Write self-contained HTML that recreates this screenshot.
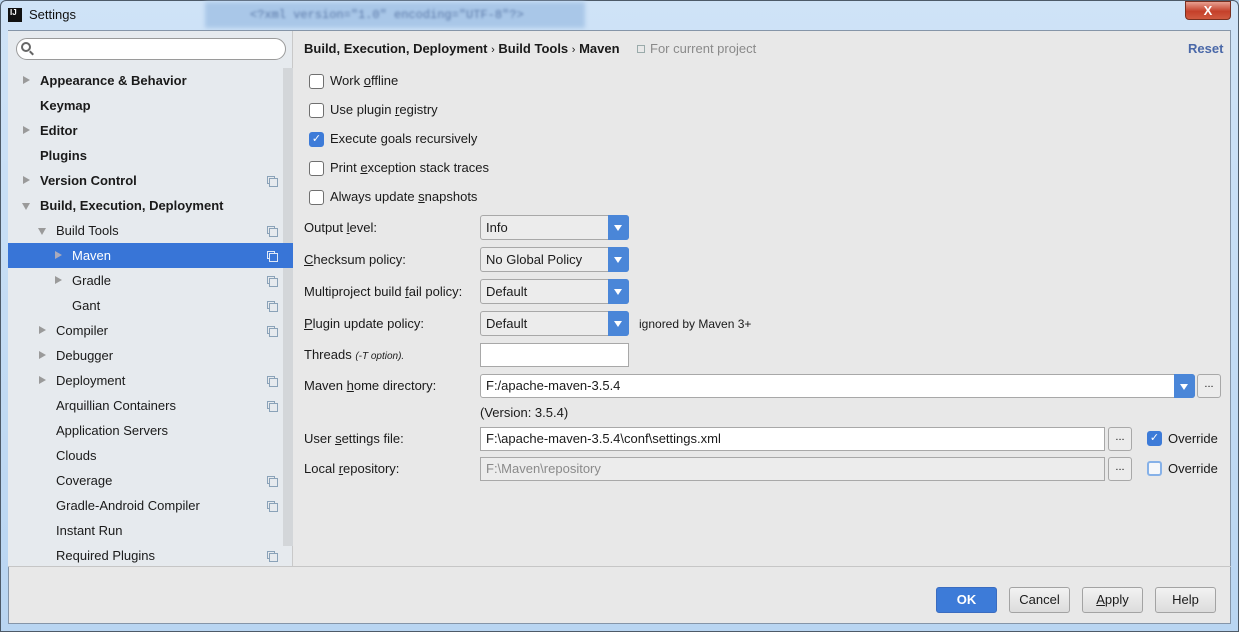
<!DOCTYPE html>
<html><head><meta charset="utf-8"><style>
*{margin:0;padding:0;box-sizing:border-box}
body{width:1239px;height:632px;overflow:hidden;position:relative;background:#bcd7f0;font-family:"Liberation Sans","DejaVu Sans",sans-serif;font-size:13px;color:#1a1a1a}
.a{position:absolute}
.win{left:0;top:0;width:1239px;height:632px;border:1px solid #4d5a68;border-radius:6px 6px 0 0;background:linear-gradient(#cfe3f7,#b9d5f1)}
.content{left:8px;top:30px;width:1223px;height:594px;background:#e8e8e8;border:1px solid #8595a8}
.side{left:8px;top:31px;width:285px;height:535px;background:#e6eaee;border-right:1px solid #c9c9c9}
.sb{left:283px;top:68px;width:10px;height:478px;background:#d3d6d9}
.row{position:absolute;left:8px;width:275px;height:25px;line-height:25px;font-size:13px}
.row.sel{background:#3875d7;color:#fff;width:285px}
.tri{position:absolute;width:0;height:0;top:8px;border-left:7px solid #9a9a9a;border-top:4.5px solid transparent;border-bottom:4.5px solid transparent}
.trid{position:absolute;width:0;height:0;top:10px;border-top:7px solid #9a9a9a;border-left:4.5px solid transparent;border-right:4.5px solid transparent}
.cp{position:absolute;left:259px;top:8px;width:8px;height:8px;border:1px solid #8aa2b8}
.cp:after{content:"";position:absolute;left:1px;top:1px;width:7px;height:7px;border:1px solid #8aa2b8;background:#e6eaee}
.sel .cp{border-color:#dfe8f7}.sel .cp:after{border-color:#dfe8f7;background:#3875d7}
.b{font-weight:bold}
.cb{position:absolute;width:15px;height:15px;border:1px solid #6f6f6f;border-radius:3px;background:#fff}
.cb.on{background:#3d7bd8;border-color:#3d7bd8;color:#fff;font-size:11px;line-height:13px;text-align:center;font-weight:bold}
.lbl{position:absolute;font-size:13px}
.combo{position:absolute;width:149px;height:25px;border:1px solid #a8a8a8;border-radius:3px;background:#ececec;line-height:23px;padding-left:5px}
.combo .arr,.arr{position:absolute;right:-1px;top:-1px;width:21px;height:25px;background:#4a86d8;border-radius:0 3px 3px 0}
.arr:after{content:"";position:absolute;left:6px;top:10px;border-top:6px solid #fff;border-left:4.5px solid transparent;border-right:4.5px solid transparent}
.field{position:absolute;height:24px;border:1px solid #a8a8a8;background:#fff;line-height:22px;padding-left:5px}
.dots{position:absolute;width:24px;height:24px;border:1px solid #a8a8a8;border-radius:3px;background:#ececec;text-align:center;line-height:18px;font-size:11px}
.btn{position:absolute;top:587px;width:61px;height:26px;border:1px solid #a3a3a3;border-radius:3px;background:linear-gradient(#f2f2f2,#dcdcdc);text-align:center;line-height:24px}
u{text-decoration:underline}
</style></head><body>
<div class="a win"></div>
<div class="a" style="left:205px;top:2px;width:380px;height:26px;background:#a9c7e8;filter:blur(2px)"></div>
<div class="a" style="left:250px;top:8px;color:#5a78a8;font-family:'Liberation Mono',monospace;font-size:12px;filter:blur(1.2px)">&lt;?xml version="1.0" encoding="UTF-8"?&gt;</div>
<div class="a" style="left:8px;top:8px;width:14px;height:14px;background:#111;color:#fff;font-size:8px;font-weight:bold;line-height:10px;padding-left:2px">IJ</div>
<div class="a" style="left:29px;top:7px;font-size:13px;color:#111">Settings</div>
<div class="a" style="left:1185px;top:1px;width:46px;height:19px;background:linear-gradient(#e8a090,#c4402a 55%,#d05a40);border:1px solid #7a3020;border-radius:0 0 4px 4px;color:#fff;text-align:center;font-weight:bold;font-size:13px;line-height:17px">X</div>
<div class="a content"></div>
<div class="a side"></div>
<div class="a sb"></div>
<div class="a" style="left:16px;top:38px;width:270px;height:22px;border:1px solid #9a9a9a;border-radius:11px;background:#fff"></div>
<div class="a" style="left:21px;top:42px;width:10px;height:10px;border:2px solid #666;border-radius:50%"></div>
<div class="a" style="left:29px;top:52px;width:5px;height:2px;background:#666;transform:rotate(45deg)"></div>

<div class="row" style="top:68px"><span class="tri" style="left:15px"></span><span class="b" style="position:absolute;left:32px">Appearance &amp; Behavior</span></div>
<div class="row" style="top:93px"><span class="b" style="position:absolute;left:32px">Keymap</span></div>
<div class="row" style="top:118px"><span class="tri" style="left:15px"></span><span class="b" style="position:absolute;left:32px">Editor</span></div>
<div class="row" style="top:143px"><span class="b" style="position:absolute;left:32px">Plugins</span></div>
<div class="row" style="top:168px"><span class="tri" style="left:15px"></span><span class="b" style="position:absolute;left:32px">Version Control</span><span class="cp"></span></div>
<div class="row" style="top:193px"><span class="trid" style="left:14px"></span><span class="b" style="position:absolute;left:32px">Build, Execution, Deployment</span></div>
<div class="row" style="top:218px"><span class="trid" style="left:30px"></span><span style="position:absolute;left:48px">Build Tools</span><span class="cp"></span></div>
<div class="row sel" style="top:243px"><span class="tri" style="left:47px;border-left-color:#aab"></span><span style="position:absolute;left:64px">Maven</span><span class="cp"></span></div>
<div class="row" style="top:268px"><span class="tri" style="left:47px"></span><span style="position:absolute;left:64px">Gradle</span><span class="cp"></span></div>
<div class="row" style="top:293px"><span style="position:absolute;left:64px">Gant</span><span class="cp"></span></div>
<div class="row" style="top:318px"><span class="tri" style="left:31px"></span><span style="position:absolute;left:48px">Compiler</span><span class="cp"></span></div>
<div class="row" style="top:343px"><span class="tri" style="left:31px"></span><span style="position:absolute;left:48px">Debugger</span></div>
<div class="row" style="top:368px"><span class="tri" style="left:31px"></span><span style="position:absolute;left:48px">Deployment</span><span class="cp"></span></div>
<div class="row" style="top:393px"><span style="position:absolute;left:48px">Arquillian Containers</span><span class="cp"></span></div>
<div class="row" style="top:418px"><span style="position:absolute;left:48px">Application Servers</span></div>
<div class="row" style="top:443px"><span style="position:absolute;left:48px">Clouds</span></div>
<div class="row" style="top:468px"><span style="position:absolute;left:48px">Coverage</span><span class="cp"></span></div>
<div class="row" style="top:493px"><span style="position:absolute;left:48px">Gradle-Android Compiler</span><span class="cp"></span></div>
<div class="row" style="top:518px"><span style="position:absolute;left:48px">Instant Run</span></div>
<div class="row" style="top:543px"><span style="position:absolute;left:48px">Required Plugins</span><span class="cp"></span></div>
<div class="a" style="left:8px;top:566px;width:1223px;height:1px;background:#c6c6c6"></div>

<div class="lbl b" style="left:304px;top:41px">Build, Execution, Deployment <span style="font-weight:normal;font-size:11px">›</span> Build Tools <span style="font-weight:normal;font-size:11px">›</span> Maven</div>
<div class="a" style="left:637px;top:45px;width:8px;height:8px;border:1px solid #9aa"></div>
<div class="lbl" style="left:650px;top:41px;color:#8a8a8a">For current project</div>
<div class="lbl b" style="left:1188px;top:41px;color:#4a68a8">Reset</div>

<div class="cb" style="left:309px;top:74px"></div><div class="lbl" style="left:330px;top:73px">Work <u>o</u>ffline</div>
<div class="cb" style="left:309px;top:103px"></div><div class="lbl" style="left:330px;top:102px">Use plugin <u>r</u>egistry</div>
<div class="cb on" style="left:309px;top:132px">✓</div><div class="lbl" style="left:330px;top:131px">Execute <u>g</u>oals recursively</div>
<div class="cb" style="left:309px;top:161px"></div><div class="lbl" style="left:330px;top:160px">Print <u>e</u>xception stack traces</div>
<div class="cb" style="left:309px;top:190px"></div><div class="lbl" style="left:330px;top:189px">Always update <u>s</u>napshots</div>

<div class="lbl" style="left:304px;top:220px">Output <u>l</u>evel:</div>
<div class="combo" style="left:480px;top:215px">Info<span class="arr"></span></div>
<div class="lbl" style="left:304px;top:252px"><u>C</u>hecksum policy:</div>
<div class="combo" style="left:480px;top:247px">No Global Policy<span class="arr"></span></div>
<div class="lbl" style="left:304px;top:284px">Multiproject build <u>f</u>ail policy:</div>
<div class="combo" style="left:480px;top:279px">Default<span class="arr"></span></div>
<div class="lbl" style="left:304px;top:316px"><u>P</u>lugin update policy:</div>
<div class="combo" style="left:480px;top:311px">Default<span class="arr"></span></div>
<div class="lbl" style="left:639px;top:317px;font-size:12px">ignored by Maven 3+</div>

<div class="lbl" style="left:304px;top:347px">Threads <i style="font-size:10px">(-T option).</i></div>
<div class="field" style="left:480px;top:343px;width:149px"></div>
<div class="lbl" style="left:304px;top:378px">Maven <u>h</u>ome directory:</div>
<div class="field" style="left:480px;top:374px;width:715px;border-radius:3px">F:/apache-maven-3.5.4<span class="arr" style="top:-1px;height:24px"></span></div>
<div class="dots" style="left:1197px;top:374px">...</div>
<div class="lbl" style="left:480px;top:405px">(Version: 3.5.4)</div>
<div class="lbl" style="left:304px;top:431px">User <u>s</u>ettings file:</div>
<div class="field" style="left:480px;top:427px;width:625px">F:\apache-maven-3.5.4\conf\settings.xml</div>
<div class="dots" style="left:1108px;top:427px">...</div>
<div class="cb on" style="left:1147px;top:431px">✓</div><div class="lbl" style="left:1168px;top:431px">Override</div>
<div class="lbl" style="left:304px;top:461px">Local <u>r</u>epository:</div>
<div class="field" style="left:480px;top:457px;width:625px;background:#ececec;color:#8a8a8a">F:\Maven\repository</div>
<div class="dots" style="left:1108px;top:457px">...</div>
<div class="cb" style="left:1147px;top:461px;border:2px solid #86b1e8;background:#f5f7fa"></div><div class="lbl" style="left:1168px;top:461px">Override</div>

<div class="btn b" style="left:936px;background:#3d7bd8;border-color:#3a6cc0;color:#fff">OK</div>
<div class="btn" style="left:1009px">Cancel</div>
<div class="btn" style="left:1082px"><u>A</u>pply</div>
<div class="btn" style="left:1155px">Help</div>
</body></html>
